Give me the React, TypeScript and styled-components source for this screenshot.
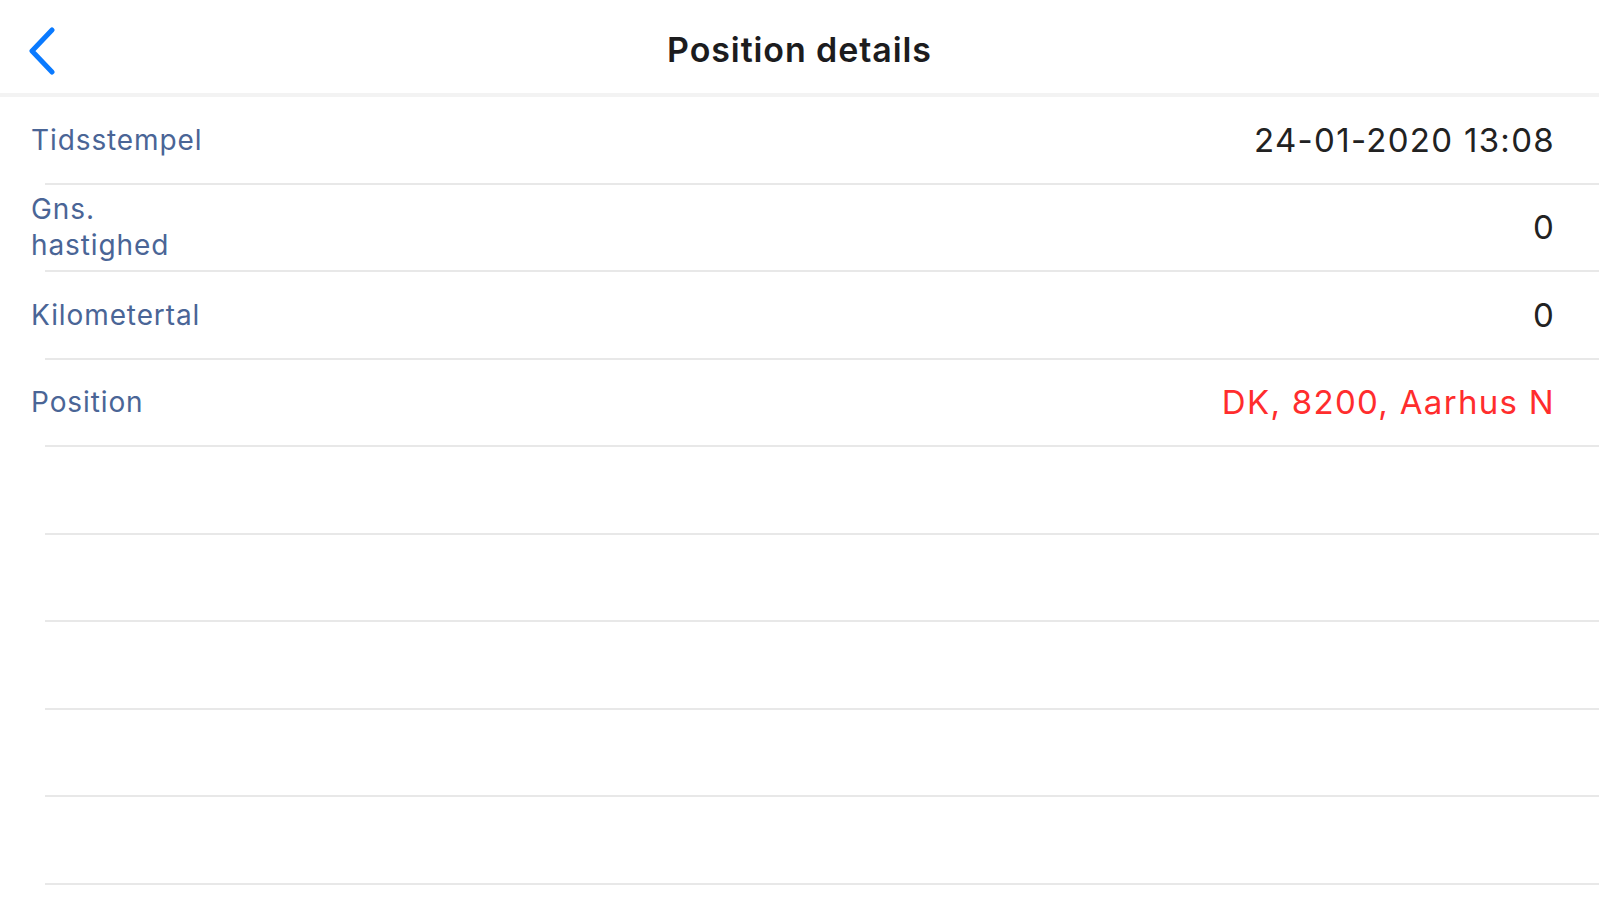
import styled, { createGlobalStyle } from 'styled-components';

const GlobalStyle = createGlobalStyle`
  html, body {
    margin: 0;
    padding: 0;
    background: #ffffff;
  }
  body {
    font-family: Inter, 'Liberation Sans', sans-serif;
  }
`;

const Screen = styled.div`
  width: 100%;
  min-height: 900px;
  background: #ffffff;
`;

const NavBar = styled.header`
  position: relative;
  height: 93px;
  display: flex;
  align-items: center;
  justify-content: center;
  border-bottom: 4px solid #f3f3f3;
`;

const BackButton = styled.button`
  position: absolute;
  left: 27px;
  top: 25px;
  width: 30px;
  height: 52px;
  padding: 0;
  border: none;
  background: none;
  cursor: pointer;
  display: flex;
  align-items: center;
  justify-content: center;
`;

const Title = styled.h1`
  margin: 0;
  padding-top: 5px;
  font-size: 34px;
  font-weight: 600;
  color: #1c1c1e;
  letter-spacing: 0.9px;
`;

const List = styled.div`
  display: flex;
  flex-direction: column;
`;

const Row = styled.div`
  position: relative;
  height: 85.5px;
  display: flex;
  align-items: center;
  justify-content: space-between;
  padding: 0 44px 0 31px;
  border-bottom: 2px solid transparent;

  &::after {
    content: '';
    position: absolute;
    left: 45px;
    right: 0;
    bottom: -2px;
    height: 2px;
    background: #e8e8e8;
  }
`;

const Label = styled.span`
  width: 190px;
  font-size: 28px;
  line-height: 36px;
  letter-spacing: 0.9px;
  color: #4a6596;
`;

const Value = styled.span<{ $alert?: boolean }>`
  font-size: 33px;
  letter-spacing: 1.3px;
  color: ${(p) => (p.$alert ? '#ff2d2d' : '#222222')};
  text-align: right;
`;

const rows: { label: string; value: string; alert?: boolean }[] = [
  { label: 'Tidsstempel', value: '24-01-2020 13:08' },
  { label: 'Gns. hastighed', value: '0' },
  { label: 'Kilometertal', value: '0' },
  { label: 'Position', value: 'DK, 8200, Aarhus N', alert: true },
];

function ChevronLeft() {
  return (
    <svg width="30" height="48" viewBox="0 0 30 48" fill="none">
      <path
        d="M25 3 L5 24 L25 45"
        stroke="#0a7aff"
        strokeWidth="5"
        strokeLinecap="round"
        strokeLinejoin="round"
      />
    </svg>
  );
}

function App() {
  return (
    <Screen>
      <GlobalStyle />
      <NavBar>
        <BackButton aria-label="Back">
          <ChevronLeft />
        </BackButton>
        <Title>Position details</Title>
      </NavBar>
      <List>
        {rows.map((r) => (
          <Row key={r.label}>
            <Label>{r.label}</Label>
            <Value $alert={r.alert}>{r.value}</Value>
          </Row>
        ))}
        {Array.from({ length: 5 }).map((_, i) => (
          <Row key={`empty-${i}`} />
        ))}
      </List>
    </Screen>
  );
}

export default App;
